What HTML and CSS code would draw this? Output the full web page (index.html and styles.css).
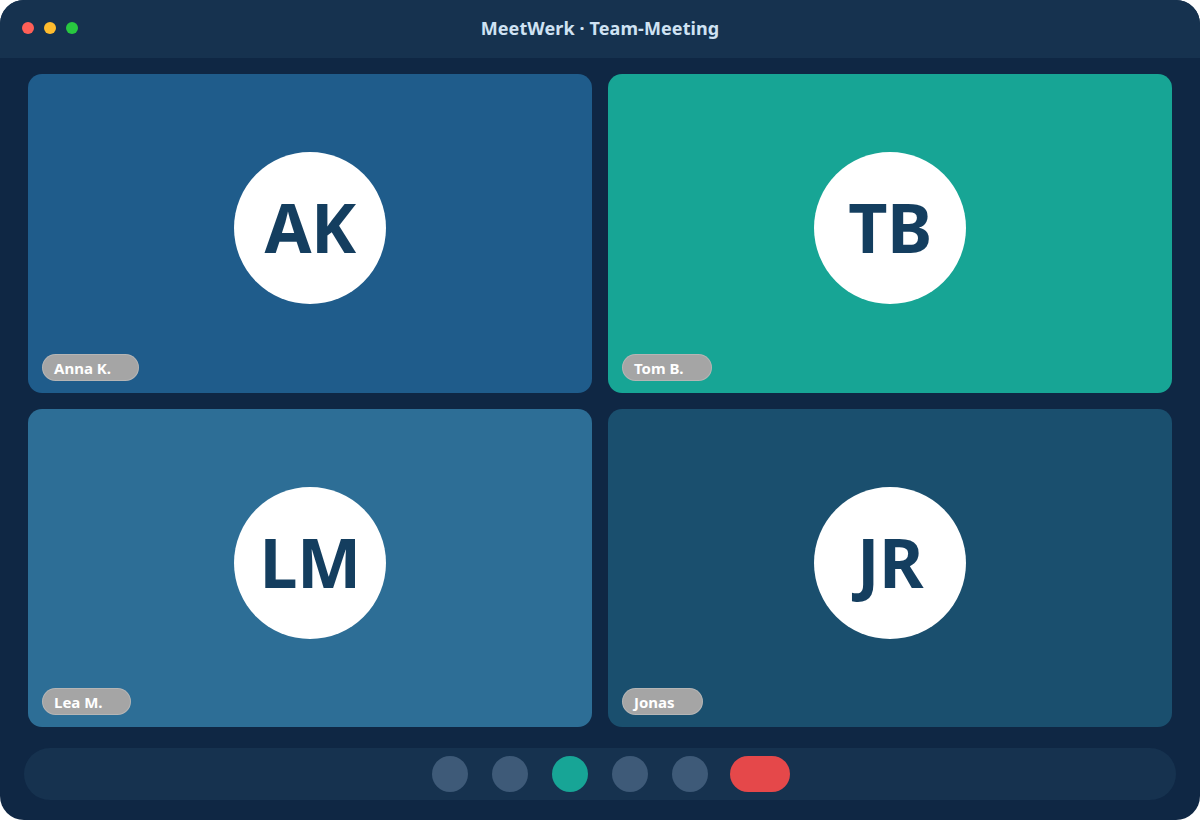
FILE: index.html
```html
<!DOCTYPE html>
<html lang="de">
<head>
<meta charset="utf-8">
<title>MeetWerk · Team-Meeting</title>
<link rel="stylesheet" href="styles.css">
</head>
<body>
<div class="window">
  <header class="titlebar">
    <div class="lights">
      <span class="light red"></span>
      <span class="light yellow"></span>
      <span class="light green"></span>
    </div>
    <div class="title">MeetWerk · Team-Meeting</div>
  </header>
  <main class="stage">
    <div class="grid">
      <div class="tile t1">
        <div class="avatar">AK</div>
        <div class="name">Anna K.</div>
      </div>
      <div class="tile t2">
        <div class="avatar">TB</div>
        <div class="name">Tom B.</div>
      </div>
      <div class="tile t3">
        <div class="avatar">LM</div>
        <div class="name">Lea M.</div>
      </div>
      <div class="tile t4">
        <div class="avatar">JR</div>
        <div class="name">Jonas</div>
      </div>
    </div>
  </main>
  <footer class="controls">
    <span class="btn"></span>
    <span class="btn"></span>
    <span class="btn active"></span>
    <span class="btn"></span>
    <span class="btn"></span>
    <span class="btn leave"></span>
  </footer>
</div>
</body>
</html>
```

FILE: styles.css
```css
html, body {
  margin: 0;
  padding: 0;
  background: #ffffff;
}
body {
  font-family: "Noto Sans", "Open Sans", sans-serif;
}
.window {
  width: 1200px;
  height: 820px;
  border-radius: 24px;
  overflow: hidden;
  background: #0f2744;
  display: flex;
  flex-direction: column;
}
.titlebar {
  height: 58px;
  flex: none;
  background: #16324f;
  position: relative;
  display: flex;
  align-items: center;
  justify-content: center;
  padding-bottom: 3px;
  box-sizing: border-box;
}
.lights {
  position: absolute;
  left: 22px;
  top: 22px;
  display: flex;
  gap: 10px;
}
.light {
  width: 12px;
  height: 12px;
  border-radius: 50%;
}
.red { background: #ff5f57; }
.yellow { background: #febc2e; }
.green { background: #28c840; }
.title {
  color: #cfe2f3;
  font-weight: 700;
  font-size: 18px;
  letter-spacing: 0.1px;
}
.stage {
  flex: 1;
  padding: 16px 28px 0;
  display: flex;
}
.grid {
  flex: 1;
  display: grid;
  grid-template-columns: 1fr 1fr;
  grid-template-rows: 1fr 1fr;
  gap: 16px;
}
.tile {
  position: relative;
  border-radius: 14px;
  display: flex;
  align-items: center;
  justify-content: center;
  padding-bottom: 10px;
}
.t1 { background: #1f5c8b; }
.t2 { background: #17a595; }
.t3 { background: #2d6e96; }
.t4 { background: #1a4f6e; }
.avatar {
  width: 152px;
  height: 152px;
  border-radius: 50%;
  background: #ffffff;
  color: #143e5f;
  font-weight: 700;
  font-size: 68px;
  line-height: 1;
  display: flex;
  align-items: center;
  justify-content: center;
  letter-spacing: -0.5px;
  padding-bottom: 2px;
  box-sizing: border-box;
}
.name {
  position: absolute;
  left: 14px;
  bottom: 12px;
  height: 27px;
  line-height: 29px;
  padding: 0 28px 0 12px;
  border-radius: 14px;
  background: #a5a5a5;
  box-shadow: inset 0 0 0 1px rgba(255, 255, 255, 0.18);
  color: #ffffff;
  font-weight: 700;
  font-size: 15px;
  box-sizing: border-box;
}
.controls {
  flex: none;
  height: 52px;
  margin: 21px 24px 20px;
  border-radius: 26px;
  background: #16324f;
  display: flex;
  align-items: center;
  justify-content: center;
  gap: 24px;
  padding-left: 22px;
}
.btn {
  width: 36px;
  height: 36px;
  border-radius: 18px;
  background: #3e5a78;
}
.btn.active { background: #17a596; }
.btn.leave {
  width: 60px;
  background: #e5484a;
  margin-left: -2px;
}
```
